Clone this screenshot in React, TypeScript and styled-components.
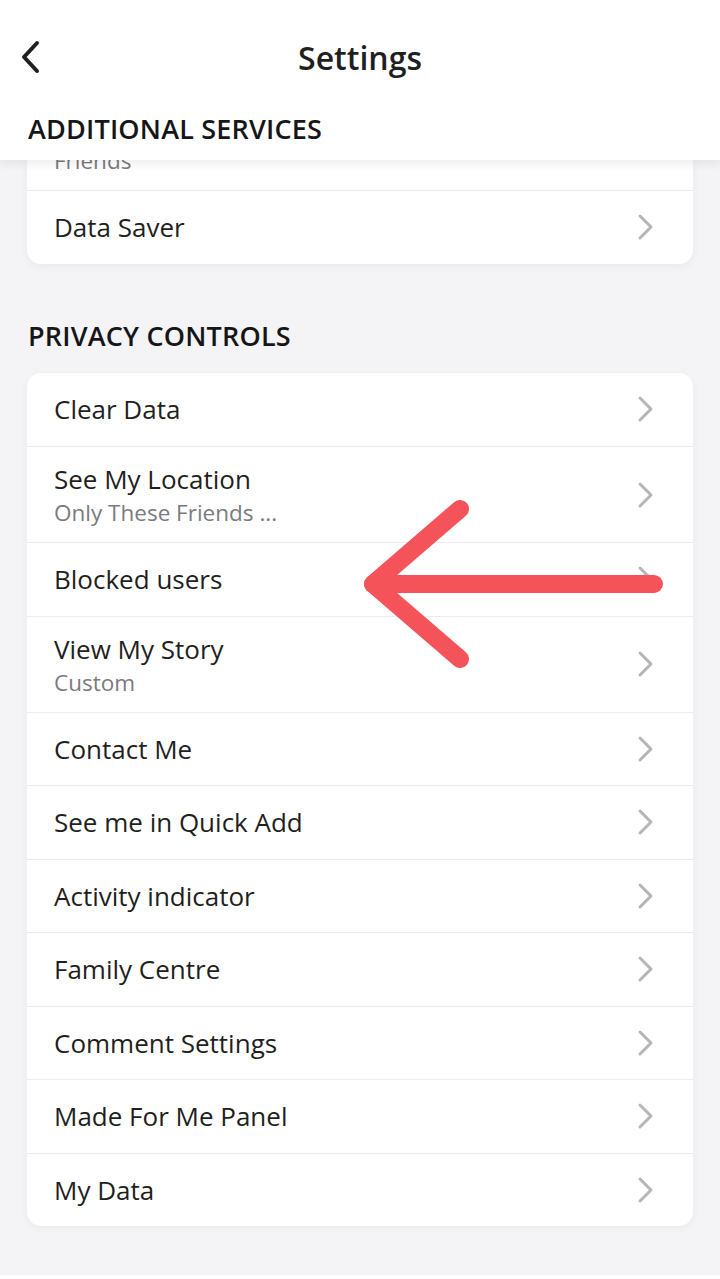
import React from "react";
import styled, { createGlobalStyle } from "styled-components";

const Global = createGlobalStyle`
  html, body { margin: 0; padding: 0; background: #ffffff; }
  body { font-family: "Open Sans", "Lato", sans-serif; -webkit-font-smoothing: antialiased; }
  * { box-sizing: border-box; }
`;

const Page = styled.div`
  position: relative;
  width: 720px;
  height: 1275px;
  background: #f4f4f6;
  overflow: hidden;
  display: flex;
  flex-direction: column;
`;

const Header = styled.header`
  position: relative;
  z-index: 2;
  height: 160px;
  flex: none;
  background: #ffffff;
  box-shadow: 0 4px 10px rgba(0, 0, 0, 0.07);
  display: flex;
  flex-direction: column;
`;

const TopBar = styled.div`
  height: 114px;
  display: grid;
  grid-template-columns: 80px 1fr 80px;
  align-items: center;
`;

const BackButton = styled.button`
  border: 0;
  background: transparent;
  padding: 0 0 0 18px;
  height: 40px;
  display: flex;
  align-items: center;
  cursor: pointer;
`;

const Title = styled.h1`
  margin: 0;
  text-align: center;
  font-size: 32px;
  font-weight: 600;
  color: #1f1f21;
`;

const StickyLabel = styled.div`
  padding-left: 28px;
  font-size: 27px;
  line-height: 30px;
  font-weight: 600;
  color: #161618;
  letter-spacing: 0.2px;
`;

const Content = styled.main`
  position: relative;
  z-index: 1;
  padding: 0 27px;
  display: flex;
  flex-direction: column;
`;

const SectionLabel = styled.div`
  margin: 57px 0 22px 1px;
  font-size: 27px;
  line-height: 30px;
  font-weight: 600;
  color: #161618;
  letter-spacing: 0.2px;
`;

const Card = styled.div<{ $cut?: boolean }>`
  background: #ffffff;
  border-radius: ${(p) => (p.$cut ? "0 0 14px 14px" : "14px")};
  box-shadow: 0 2px 8px rgba(0, 0, 0, 0.05);
  overflow: hidden;
  display: flex;
  flex-direction: column;
`;

const Row = styled.div<{ $double?: boolean }>`
  height: ${(p) => (p.$double ? "96px" : "73.5px")};
  display: flex;
  align-items: center;
  padding: 0 37px 0 27px;
  border-top: 1.5px solid #ececee;
  &:first-child { border-top: 0; }
`;

const ClippedRow = styled.div`
  height: 30px;
  overflow: hidden;
  padding: 0 27px;
`;

const Texts = styled.div`
  flex: 1;
  display: flex;
  flex-direction: column;
  gap: 5px;
`;

const RowTitle = styled.div`
  font-size: 26px;
  line-height: 32px;
  font-weight: 500;
  color: #1f1f21;
`;

const RowSub = styled.div<{ $lift?: number }>`
  font-size: 22.5px;
  line-height: 26px;
  color: #7b7b7e;
  margin-top: ${(p) => (p.$lift ? `-${p.$lift}px` : "0")};
`;

const ArrowOverlay = styled.svg`
  position: absolute;
  left: 0;
  top: 0;
  z-index: 3;
  pointer-events: none;
`;

const Chevron = () => (
  <svg width="20" height="28" viewBox="0 0 20 28">
    <path d="M4 3 L15 14 L4 25" fill="none" stroke="#b6b6b8" strokeWidth="3" strokeLinecap="round" strokeLinejoin="round" />
  </svg>
);

type Item = { title: string; sub?: string };

const privacy: Item[] = [
  { title: "Clear Data" },
  { title: "See My Location", sub: "Only These Friends ..." },
  { title: "Blocked users" },
  { title: "View My Story", sub: "Custom" },
  { title: "Contact Me" },
  { title: "See me in Quick Add" },
  { title: "Activity indicator" },
  { title: "Family Centre" },
  { title: "Comment Settings" },
  { title: "Made For Me Panel" },
  { title: "My Data" },
];

const SettingRow = ({ title, sub }: Item) => (
  <Row $double={!!sub}>
    <Texts>
      <RowTitle>{title}</RowTitle>
      {sub && <RowSub>{sub}</RowSub>}
    </Texts>
    <Chevron />
  </Row>
);

export default function App() {
  return (
    <>
      <Global />
      <Page>
        <Header>
          <TopBar>
            <BackButton aria-label="Back">
              <svg width="26" height="36" viewBox="0 0 26 36">
                <path d="M19 4 L6 18 L19 32" fill="none" stroke="#1f1f21" strokeWidth="4" strokeLinecap="round" strokeLinejoin="round" />
              </svg>
            </BackButton>
            <Title>Settings</Title>
            <div />
          </TopBar>
          <StickyLabel>ADDITIONAL SERVICES</StickyLabel>
        </Header>
        <Content>
          <Card $cut>
            <ClippedRow>
              <RowSub $lift={12}>Friends</RowSub>
            </ClippedRow>
            <SettingRow title="Data Saver" />
          </Card>
          <SectionLabel>PRIVACY CONTROLS</SectionLabel>
          <Card>
            {privacy.map((it) => (
              <SettingRow key={it.title} {...it} />
            ))}
          </Card>
        </Content>
        <ArrowOverlay width="720" height="1275" viewBox="0 0 720 1275">
          <g fill="none" stroke="#f5535a" strokeWidth="18" strokeLinecap="round" strokeLinejoin="round">
            <path d="M460 509 L373 584 L460 659" />
            <path d="M373 584 L654 584" />
          </g>
        </ArrowOverlay>
      </Page>
    </>
  );
}
